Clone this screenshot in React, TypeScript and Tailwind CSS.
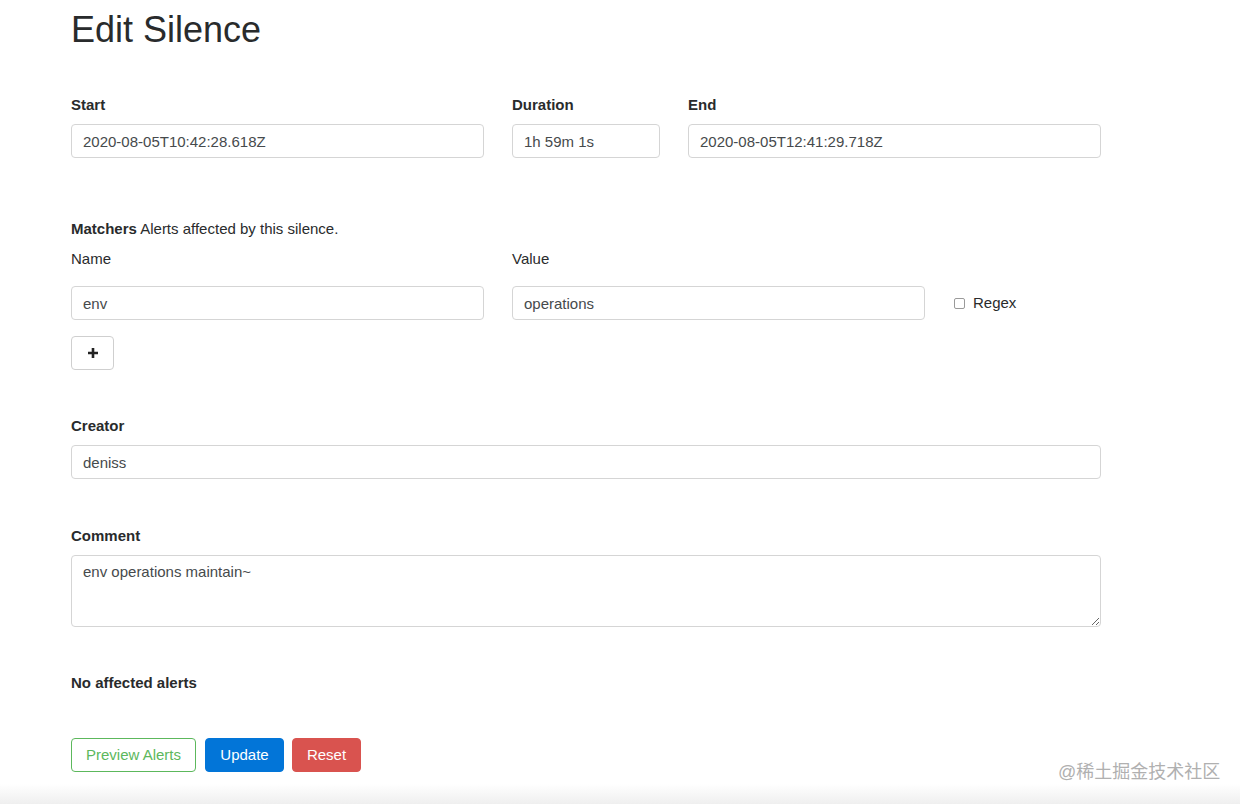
import React from "react";

const inputCls =
    "block w-full h-[34px] px-[11px] border border-[#d5d5d5] rounded-[4px] bg-white text-[15px] text-[#464a4c] outline-none";

const Label: React.FC<{ children: React.ReactNode; bold?: boolean }> = ({ children, bold = true }) => (
    <div className={`h-[22px] leading-[22px] text-[15px] text-[#292b2c] ${bold ? "font-bold" : ""}`}>{children}</div>
);

const App: React.FC = () => {
    return (
        <div
            className="relative h-[804px] overflow-hidden bg-white flex flex-col text-[#292b2c]"
            style={{ fontFamily: '"Liberation Sans", Arial, sans-serif' }}
        >
            <div className="w-[1030px] ml-[71px]">
                <h1 className="mt-[10px] h-[40px] leading-[40px] text-[36px] text-[#292b2c]">Edit Silence</h1>

                <div className="mt-[44px] flex gap-[28px]">
                    <div className="w-[413px]">
                        <Label>Start</Label>
                        <input className={`${inputCls} mt-[8px]`} readOnly value="2020-08-05T10:42:28.618Z" />
                    </div>
                    <div className="w-[148px]">
                        <Label>Duration</Label>
                        <input className={`${inputCls} mt-[8px]`} readOnly value="1h 59m 1s" />
                    </div>
                    <div className="w-[413px]">
                        <Label>End</Label>
                        <input className={`${inputCls} mt-[8px]`} readOnly value="2020-08-05T12:41:29.718Z" />
                    </div>
                </div>

                <div className="mt-[60px] h-[22px] leading-[22px] text-[15px]">
                    <span className="font-bold">Matchers</span> Alerts affected by this silence.
                </div>
                <div className="mt-[8px] flex gap-[28px]">
                    <div className="w-[413px]">
                        <Label bold={false}>Name</Label>
                        <input className={`${inputCls} mt-[16px]`} readOnly value="env" />
                    </div>
                    <div className="w-[413px]">
                        <Label bold={false}>Value</Label>
                        <input className={`${inputCls} mt-[16px]`} readOnly value="operations" />
                    </div>
                    <div className="flex items-end">
                        <div className="h-[34px] flex items-center gap-[8px] ml-[1px]">
                            <span className="w-[11px] h-[11px] border border-[#9a9a9a] rounded-[2px] bg-white" />
                            <span className="text-[15px]">Regex</span>
                        </div>
                    </div>
                </div>
                <button className="mt-[16px] w-[43px] h-[34px] border border-[#cfcfcf] rounded-[4px] bg-white flex items-center justify-center text-[#292b2c]">
                    <svg width="12" height="12" viewBox="0 0 12 12">
                        <path d="M6 1v10M1 6h10" stroke="#222" strokeWidth="2.6" />
                    </svg>
                </button>

                <div className="mt-[45px]">
                    <Label>Creator</Label>
                    <input className={`${inputCls} mt-[8px]`} readOnly value="deniss" />
                </div>

                <div className="mt-[46px]">
                    <Label>Comment</Label>
                    <textarea
                        className="block w-full h-[72px] mt-[8px] px-[11px] pt-[5px] border border-[#d5d5d5] rounded-[4px] bg-white text-[15px] leading-[22px] text-[#464a4c] outline-none"
                        readOnly
                        value="env operations maintain~"
                    />
                </div>

                <div className="mt-[45px]">
                    <Label>No affected alerts</Label>
                </div>

                <div className="mt-[44px] flex">
                    <button className="w-[125px] h-[34px] border border-[#5cb85c] rounded-[4px] bg-white text-[15px] text-[#5cb85c]">
                        Preview Alerts
                    </button>
                    <button className="ml-[9px] w-[79px] h-[34px] border border-[#0275d8] rounded-[4px] bg-[#0275d8] text-[15px] text-white">
                        Update
                    </button>
                    <button className="ml-[8px] w-[69px] h-[34px] border border-[#d9534f] rounded-[4px] bg-[#d9534f] text-[15px] text-white">
                        Reset
                    </button>
                </div>
            </div>

            <div className="mt-auto h-[20px] bg-gradient-to-b from-white to-[#efefef]" />

            <div
                className="absolute left-[1058px] top-[760px] text-[18px] leading-[24px] text-[#b0b0b0]"
                style={{ fontFamily: '"Liberation Sans", "Noto Sans CJK SC", sans-serif' }}
            >
                @稀土掘金技术社区
            </div>
        </div>
    );
};

export default App;
